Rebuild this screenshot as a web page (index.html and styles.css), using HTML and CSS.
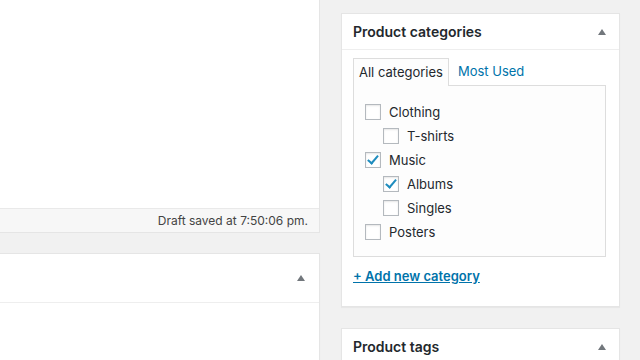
FILE: index.html
```html
<!DOCTYPE html>
<html lang="en">
<head>
    <meta charset="UTF-8">
    <meta name="viewport" content="width=device-width, initial-scale=1.0">
    <title>Edit Product</title>
    <link rel="stylesheet" href="styles.css">
</head>
<body>
    <div class="main-col">
        <div class="editor">
            <div class="editor-body"></div>
            <div class="status-bar">Draft saved at 7:50:06 pm.</div>
        </div>
        <div class="postbox wide">
            <div class="postbox-header">
                <h2></h2>
                <span class="toggle"></span>
            </div>
            <div class="postbox-body"></div>
        </div>
    </div>
    <div class="side-col">
        <div class="postbox">
            <div class="postbox-header">
                <h2>Product categories</h2>
                <span class="toggle"></span>
            </div>
            <div class="inside">
                <ul class="tabs">
                    <li class="tab active">All categories</li>
                    <li class="tab"><a href="#">Most Used</a></li>
                </ul>
                <div class="tabs-panel">
                    <ul class="checklist">
                        <li><label><span class="check"></span>Clothing</label>
                            <ul class="children">
                                <li><label><span class="check"></span>T-shirts</label></li>
                            </ul>
                        </li>
                        <li><label><span class="check checked"></span>Music</label>
                            <ul class="children">
                                <li><label><span class="check checked"></span>Albums</label></li>
                                <li><label><span class="check"></span>Singles</label></li>
                            </ul>
                        </li>
                        <li><label><span class="check"></span>Posters</label></li>
                    </ul>
                </div>
                <a class="add-link" href="#">+ Add new category</a>
            </div>
        </div>
        <div class="postbox">
            <div class="postbox-header">
                <h2>Product tags</h2>
                <span class="toggle"></span>
            </div>
        </div>
    </div>
</body>
</html>
```

FILE: styles.css
```css
body {
    margin: 0;
    height: 360px;
    overflow: hidden;
    display: flex;
    background-color: #f1f1f1;
    font-family: Inter, "Open Sans", Arial, sans-serif;
    font-size: 13px;
    color: #23282d;
}
ul {
    list-style: none;
    margin: 0;
    padding: 0;
}
.main-col {
    width: 320px;
    flex-shrink: 0;
}
.editor {
    background-color: #fff;
    border-right: 1px solid #e5e5e5;
    border-bottom: 1px solid #e5e5e5;
}
.editor-body {
    height: 208px;
}
.status-bar {
    height: 23px;
    line-height: 23px;
    background-color: #f7f7f7;
    border-top: 1px solid #e9e9e9;
    text-align: right;
    padding-right: 11px;
    font-size: 12px;
    color: #444;
}
.postbox {
    background-color: #fff;
    border: 1px solid #e5e5e5;
    box-shadow: 0 1px 1px rgba(0, 0, 0, 0.04);
}
.postbox.wide {
    margin-top: 20px;
    border-left: none;
}
.postbox-body {
    height: 120px;
}
.postbox-header {
    display: flex;
    align-items: center;
    justify-content: space-between;
    height: 35px;
    padding: 0 13px 0 11px;
    border-bottom: 1px solid #eee;
}
.postbox.wide .postbox-header {
    height: 48px;
    padding-right: 14px;
}
.postbox-header h2 {
    margin: 0;
    font-size: 14px;
    font-weight: 600;
    color: #23282d;
}
.toggle {
    width: 0;
    height: 0;
    border-left: 4px solid transparent;
    border-right: 4px solid transparent;
    border-bottom: 6px solid #72777c;
}
.side-col {
    width: 279px;
    padding: 13px 0 0 21px;
    display: flex;
    flex-direction: column;
    gap: 21px;
}
.inside {
    padding: 8px 13px 22px 11px;
}
.tabs {
    display: flex;
    align-items: flex-end;
}
.tab {
    padding: 6px 5px 7px;
    line-height: 14px;
}
.tab a {
    color: #0073aa;
    text-decoration: none;
}
.tab.active {
    border: 1px solid #ddd;
    border-bottom: none;
    background-color: #fdfdfd;
    margin-bottom: -1px;
    position: relative;
}
.tab + .tab {
    padding-left: 9px;
}
.tabs-panel {
    border: 1px solid #ddd;
    background-color: #fdfdfd;
    height: 144px;
    padding: 14px 11px 12px;
}
.checklist li {
    line-height: 24px;
}
.checklist label {
    display: flex;
    align-items: center;
    height: 24px;
}
.children {
    padding-left: 18px;
}
.check {
    width: 14px;
    height: 14px;
    border: 1px solid #b4b9be;
    background-color: #fff;
    box-shadow: inset 0 1px 2px rgba(0, 0, 0, 0.1);
    margin-right: 8px;
    position: relative;
}
.check.checked::after {
    content: "";
    position: absolute;
    left: 4px;
    top: 0;
    width: 4px;
    height: 9px;
    border-right: 2px solid #1e8cbe;
    border-bottom: 2px solid #1e8cbe;
    transform: rotate(40deg);
}
.add-link {
    display: inline-block;
    margin-top: 11px;
    color: #0073aa;
    font-weight: 600;
    text-decoration: underline;
}
```
